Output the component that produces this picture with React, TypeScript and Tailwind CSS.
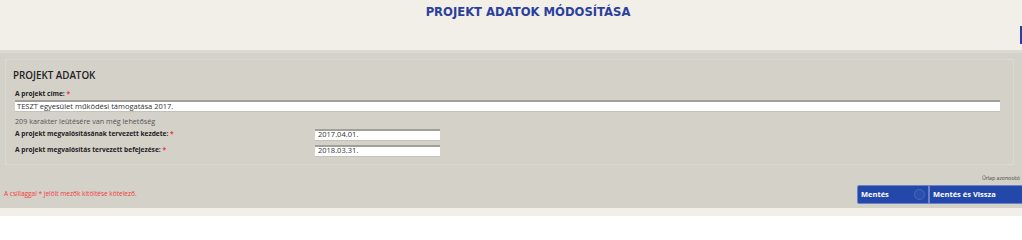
import React from "react";

const labelCls = "text-[6.6px] font-bold text-[#222] leading-none";

function Req() {
  return <span className="text-[#e53935]"> *</span>;
}

function TextBox({ value, className }: { value: string; className: string }) {
  return (
    <div
      className={
        "h-[12px] bg-white border-t-2 border-[#a29f98] border-b border-b-[#c4c1ba] px-[2px] flex items-center text-[7.5px] text-[#333] leading-none " +
        className
      }
    >
      {value}
    </div>
  );
}

export default function App() {
  return (
    <div
      className="w-[1022px] h-[216px] bg-[#f2efe8] overflow-hidden flex flex-col"
      style={{ fontFamily: '"Open Sans", "Liberation Sans", sans-serif' }}
    >
      {/* fejléc */}
      <div className="relative h-[50px] flex justify-center pt-[7px] pl-[34px]">
        <h1
          className="text-[11.6px] font-bold text-[#2b3f9c] tracking-[0px] leading-none"
          style={{ fontFamily: '"DejaVu Sans", sans-serif' }}
        >
          PROJEKT ADATOK MÓDOSÍTÁSA
        </h1>
        <div className="absolute right-0 top-[26px] w-[2px] h-[18px] bg-[#2b3f9c]" />
      </div>

      {/* űrlap */}
      <div className="h-[158px] bg-[#d4d1c9] border-t-[3px] border-[#dcd9d2] flex flex-col">
        <div className="mt-[6px] ml-[5px] mr-[8px] h-[106px] border border-[#dcd9d3] px-[7px] pt-[11px]">
          <div className="text-[9.8px] font-semibold text-[#222] leading-none">PROJEKT ADATOK</div>
          <div className="pl-[2px] mt-[10px] flex flex-col">
            <div className={labelCls}>
              A projekt címe:<Req />
            </div>
            <TextBox value="TESZT egyesület működési támogatása 2017." className="mt-[3px] w-[985px]" />
            <div className="mt-[6px] text-[7.2px] text-[#555] leading-none">
              209 karakter leütésére van még lehetőség
            </div>
            <div className="mt-[3px] flex items-center">
              <div className={labelCls + " w-[300px]"}>
                A projekt megvalósításának tervezett kezdete:<Req />
              </div>
              <TextBox value="2017.04.01." className="w-[125px] pl-[3px]" />
            </div>
            <div className="mt-[4px] flex items-center">
              <div className={labelCls + " w-[300px]"}>
                A projekt megvalósítás tervezett befejezése:<Req />
              </div>
              <TextBox value="2018.03.31." className="w-[125px] pl-[3px]" />
            </div>
          </div>
        </div>

        <div className="mt-[11px] flex justify-end pr-[2px]">
          <div className="whitespace-nowrap text-[5.2px] text-[#444] leading-none">
            Űrlap azonosító
          </div>
        </div>

        <div className="mt-[4px] flex items-center">
          <div className="flex-1 pl-[4px] text-[6.5px] text-[#ef3b3b] leading-none">
            A csillaggal * jelölt mezők kitöltése kötelező.
          </div>
          <div className="flex">
            <button className="w-[72px] h-[19px] bg-[#2448a9] border border-[#6c82c4] rounded-l-[2px] flex items-center justify-between pl-[3px] pr-[3px] text-white text-[7.5px] font-bold">
              <span>Mentés</span>
              <span className="w-[11px] h-[11px] rounded-full border border-[#4b67b8] bg-[#2a4fb0]" />
            </button>
            <button className="w-[93px] h-[19px] bg-[#2448a9] border border-r-0 border-[#6c82c4] flex items-center pl-[3px] text-white text-[7.5px] font-bold whitespace-nowrap">
              Mentés és Vissza
            </button>
          </div>
        </div>
      </div>
      <div className="flex-1 bg-[#f2efe8]" />
    </div>
  );
}
